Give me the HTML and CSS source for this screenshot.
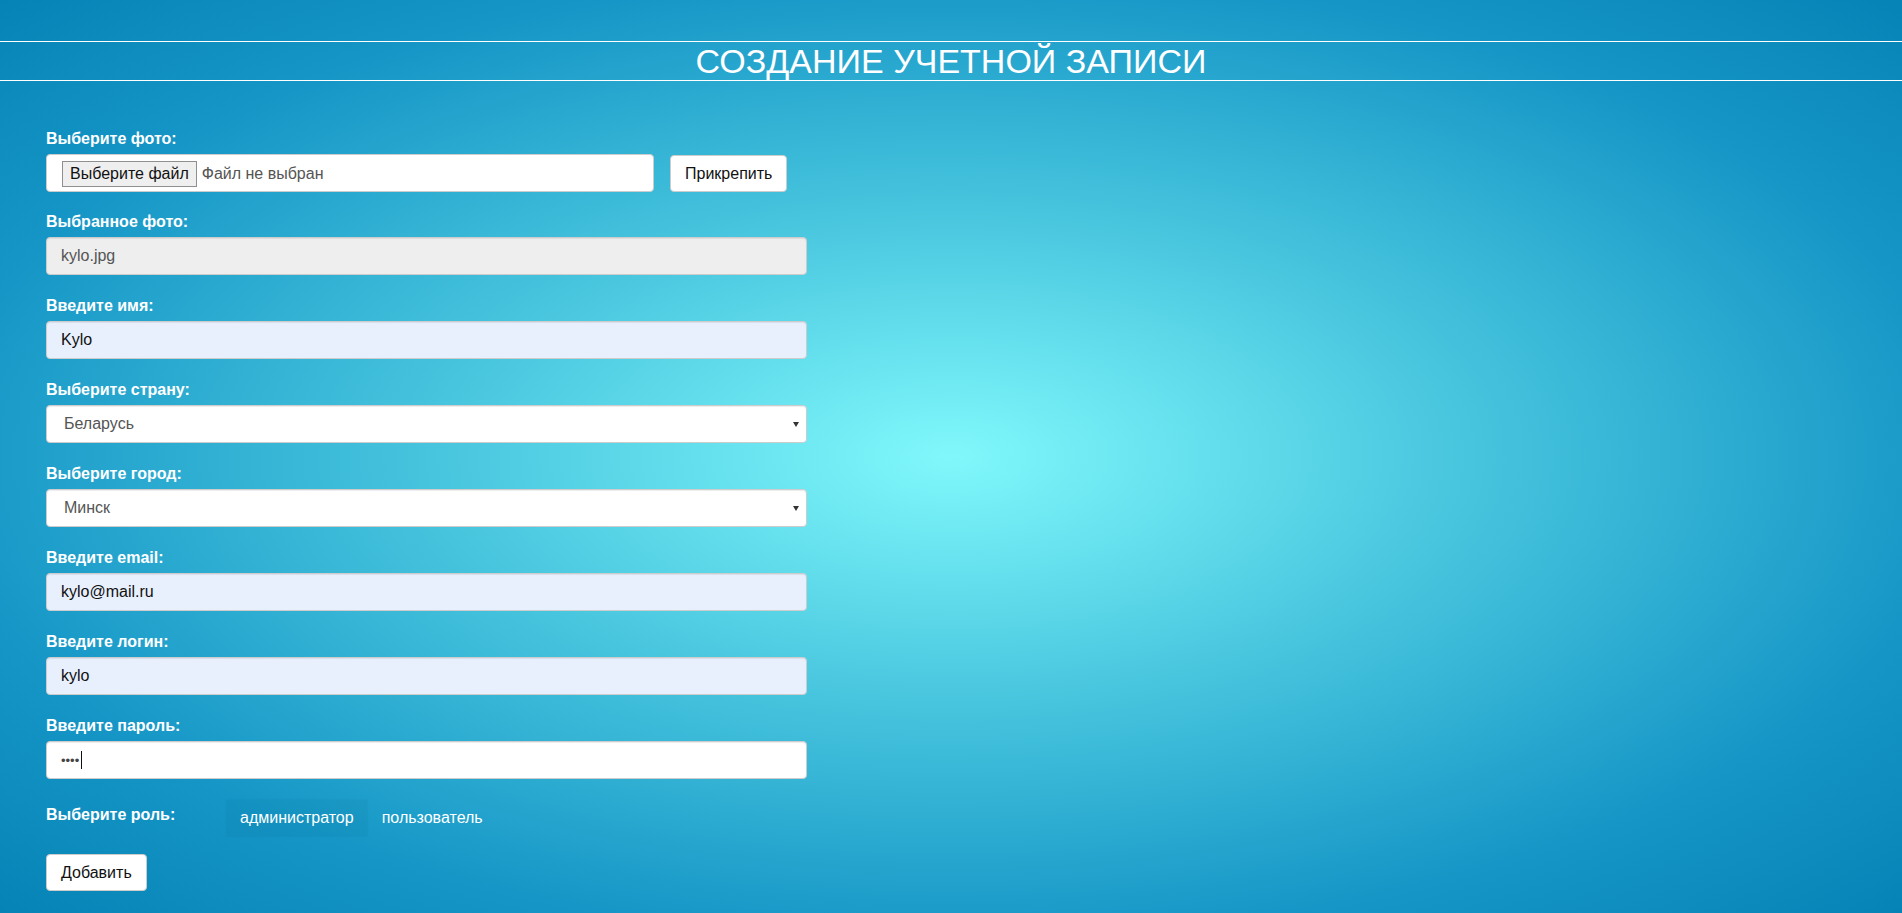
FILE: index.html
```html
<!DOCTYPE html>
<html lang="ru">
<head>
<meta charset="utf-8">
<title>Создание учетной записи</title>
<link rel="stylesheet" href="styles.css">
</head>
<body>
<header class="page-head">
  <h1 class="page-title">СОЗДАНИЕ УЧЕТНОЙ ЗАПИСИ</h1>
</header>
<form class="form">
  <div class="group group-file">
    <label class="label">Выберите фото:</label>
    <div class="file-row">
      <div class="file-box">
        <span class="file-btn">Выберите файл</span>
        <span class="file-none">Файл не выбран</span>
      </div>
      <button type="button" class="btn">Прикрепить</button>
    </div>
  </div>
  <div class="group">
    <label class="label">Выбранное фото:</label>
    <input class="field field-disabled" type="text" value="kylo.jpg" readonly>
  </div>
  <div class="group">
    <label class="label">Введите имя:</label>
    <input class="field field-filled" type="text" value="Kylo" readonly>
  </div>
  <div class="group">
    <label class="label">Выберите страну:</label>
    <div class="field select"><span class="select-text">Беларусь</span><span class="select-arrow"></span></div>
  </div>
  <div class="group">
    <label class="label">Выберите город:</label>
    <div class="field select"><span class="select-text">Минск</span><span class="select-arrow"></span></div>
  </div>
  <div class="group">
    <label class="label">Введите email:</label>
    <input class="field field-filled" type="text" value="kylo@mail.ru" readonly>
  </div>
  <div class="group">
    <label class="label">Введите логин:</label>
    <input class="field field-filled" type="text" value="kylo" readonly>
  </div>
  <div class="group">
    <label class="label">Введите пароль:</label>
    <div class="field password"><span class="dots">••••</span><span class="caret"></span></div>
  </div>
  <div class="role-row">
    <label class="label role-label">Выберите роль:</label>
    <ul class="tabs">
      <li class="tab tab-active">администратор</li>
      <li class="tab">пользователь</li>
    </ul>
  </div>
  <button type="button" class="btn btn-add">Добавить</button>
</form>
</body>
</html>
```

FILE: styles.css
```css
html, body {
  margin: 0;
  padding: 0;
}
body {
  min-height: 913px;
  font-family: "Liberation Sans", Arial, sans-serif;
  font-size: 16px;
  color: #333;
  background: radial-gradient(ellipse farthest-corner at 50% 50%, #80f8fb 0%, #45c3dd 40%, #1596c6 75%, #0683b6 100%);
}
.page-head {
  padding-top: 41px;
}
.page-title {
  margin: 0;
  height: 38px;
  line-height: 38px;
  font-size: 34px;
  font-weight: normal;
  color: #fff;
  text-align: center;
  border-top: 1px solid #fff;
  border-bottom: 1px solid #fff;
}
.form {
  padding: 48px 0 0 46px;
}
.group {
  margin-bottom: 21px;
}
.group-file {
  margin-bottom: 20px;
}
.label {
  display: block;
  margin-bottom: 5px;
  line-height: 20px;
  font-size: 16px;
  font-weight: bold;
  color: #fff;
}
.file-row {
  display: flex;
  align-items: center;
}
.file-box {
  box-sizing: border-box;
  width: 608px;
  height: 38px;
  display: flex;
  align-items: center;
  padding-left: 15px;
  background: #fff;
  border: 1px solid #ccc;
  border-radius: 4px;
}
.file-btn {
  box-sizing: border-box;
  height: 26px;
  line-height: 24px;
  padding: 0 7px;
  margin-top: 2px;
  background: #efefef;
  border: 1px solid #8f8f8f;
  color: #111;
  font-size: 16px;
}
.file-none {
  margin-left: 5px;
  margin-top: 2px;
  color: #555;
}
.btn {
  box-sizing: border-box;
  height: 37px;
  padding: 0 14px;
  margin-left: 16px;
  margin-top: 1px;
  background: #fff;
  border: 1px solid #ccc;
  border-radius: 4px;
  font-family: "Liberation Sans", Arial, sans-serif;
  font-size: 16px;
  color: #111;
}
.field {
  box-sizing: border-box;
  display: block;
  width: 761px;
  height: 38px;
  padding: 0 14px;
  margin: 0;
  border: 1px solid #ccc;
  border-radius: 4px;
  background: #fff;
  box-shadow: inset 0 1px 1px rgba(0, 0, 0, 0.075);
  font-family: "Liberation Sans", Arial, sans-serif;
  font-size: 16px;
  color: #111;
  outline: none;
}
.field-disabled {
  background: #eee;
  color: #555;
}
.field-filled {
  background: #e8f0fe;
}
.select {
  display: flex;
  align-items: center;
  justify-content: space-between;
  padding: 0 7px 0 17px;
  color: #555;
}
.select-arrow {
  width: 0;
  height: 0;
  border-left: 3px solid transparent;
  border-right: 3px solid transparent;
  border-top: 5px solid #333;
}
.password {
  display: flex;
  align-items: center;
}
.dots {
  font-size: 13px;
  color: #444;
}
.caret {
  width: 1px;
  height: 18px;
  margin-left: 2px;
  background: #111;
}
.role-row {
  display: flex;
  align-items: flex-start;
  margin-top: 19px;
}
.role-label {
  width: 181px;
  margin: 5px 0 0;
}
.tabs {
  display: flex;
  list-style: none;
  margin: 0;
  padding: 0;
}
.tab {
  padding: 8px 13px;
  line-height: 20px;
  color: #fff;
  font-size: 16px;
}
.tab + .tab {
  margin-left: 2px;
}
.tab-active {
  background: rgba(0, 60, 100, 0.05);
  box-shadow: 0 0 2px rgba(0, 40, 80, 0.1);
}
.btn-add {
  margin: 18px 0 0;
  height: 37px;
}
```
